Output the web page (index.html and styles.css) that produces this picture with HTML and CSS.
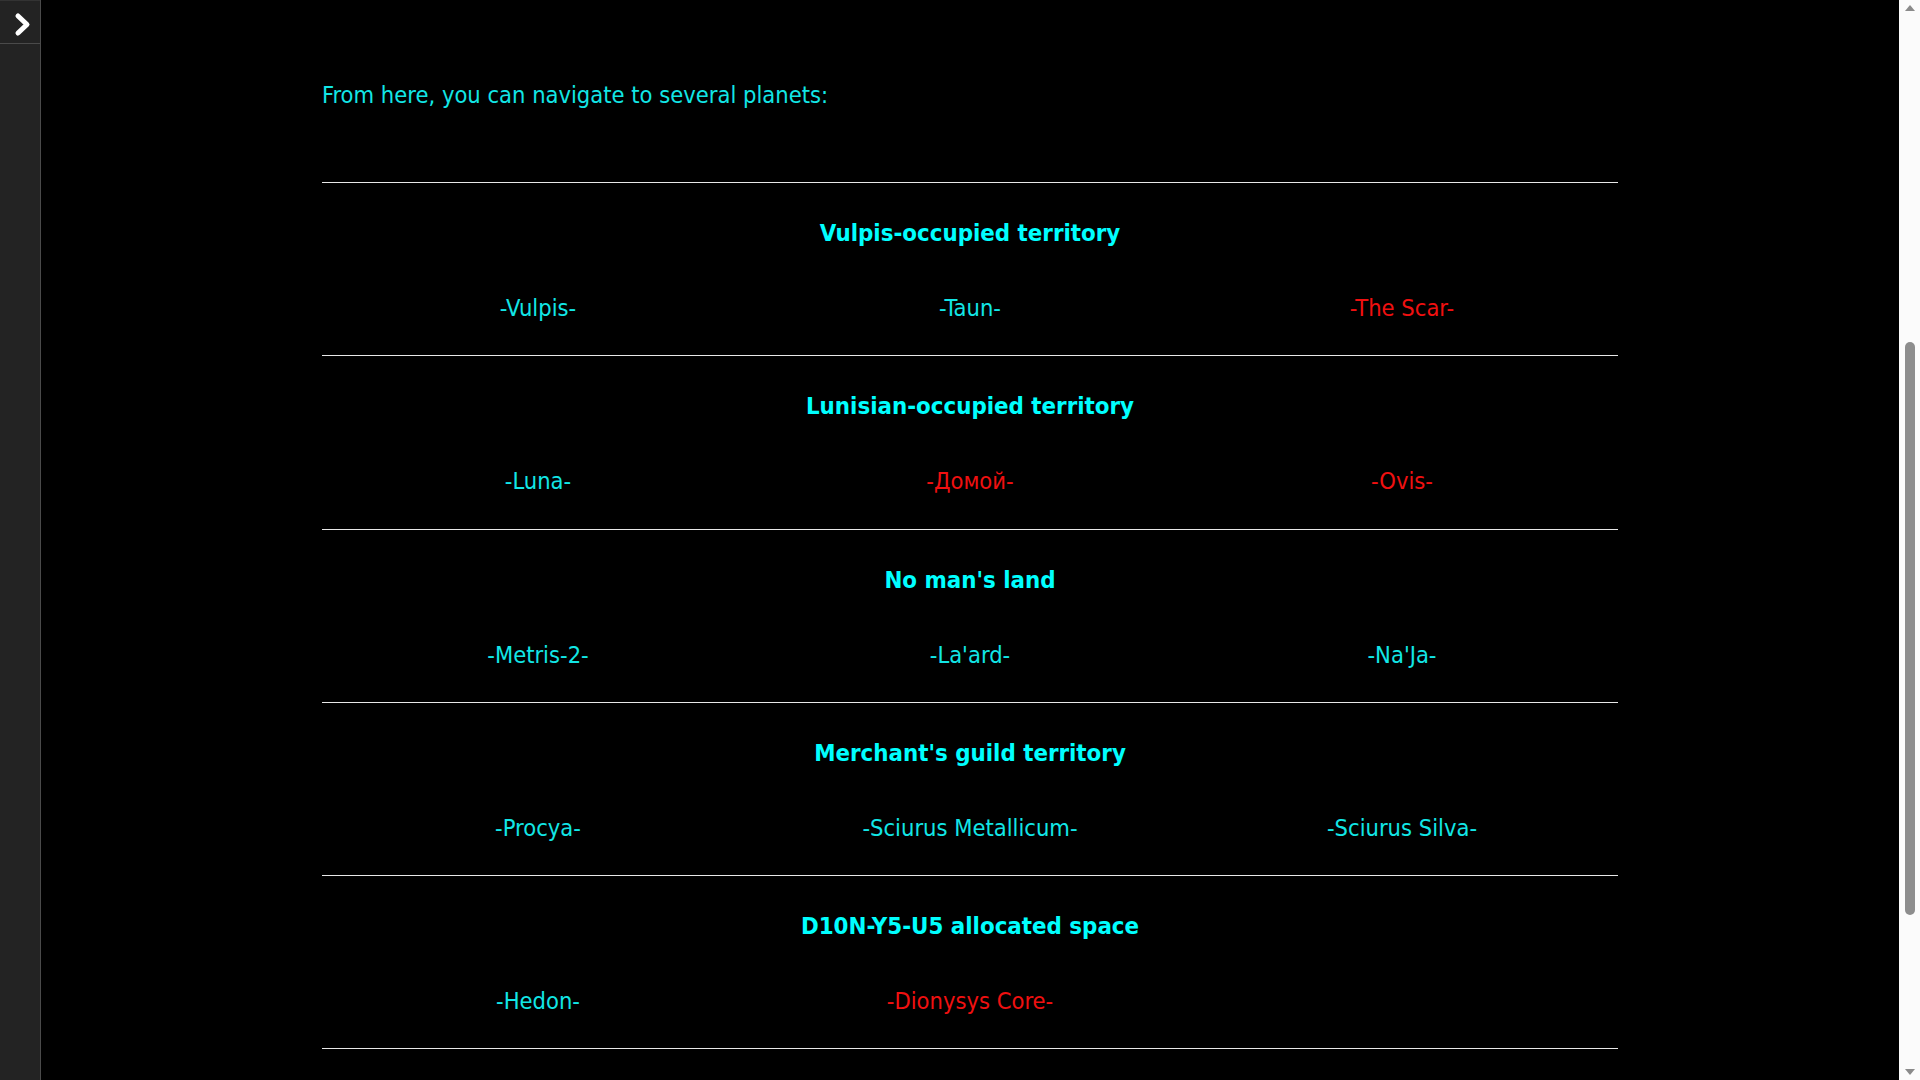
FILE: index.html
```html
<!DOCTYPE html>
<html>
<head>
    <meta name="viewport" content="width=device-width, initial-scale=1.0"/>
    <title>Planets</title>
    <link rel="stylesheet" href="styles.css">
</head>
<body>
    <div class="page">
        <div class="sidebar">
            <div class="side_btn">
                <svg width="40" height="42" viewBox="0 0 40 42">
                    <polyline points="18,15 27,23.5 18,32" fill="none" stroke="#fff" stroke-width="5" stroke-linecap="round" stroke-linejoin="round"/>
                </svg>
            </div>
        </div>

        <div class="main">
            <div class="content">
                <p class="intro">From here, you can navigate to several planets:</p>

                <div class="sector">
                    <h3>Vulpis-occupied territory</h3>
                    <div class="planets">
                        <a>-Vulpis-</a>
                        <a>-Taun-</a>
                        <a class="locked">-The Scar-</a>
                    </div>
                </div>

                <div class="sector">
                    <h3>Lunisian-occupied territory</h3>
                    <div class="planets">
                        <a>-Luna-</a>
                        <a class="locked">-Домой-</a>
                        <a class="locked">-Ovis-</a>
                    </div>
                </div>

                <div class="sector">
                    <h3>No man's land</h3>
                    <div class="planets">
                        <a>-Metris-2-</a>
                        <a>-La'ard-</a>
                        <a>-Na'Ja-</a>
                    </div>
                </div>

                <div class="sector">
                    <h3>Merchant's guild territory</h3>
                    <div class="planets">
                        <a>-Procya-</a>
                        <a>-Sciurus Metallicum-</a>
                        <a>-Sciurus Silva-</a>
                    </div>
                </div>

                <div class="sector last">
                    <h3>D10N-Y5-U5 allocated space</h3>
                    <div class="planets">
                        <a>-Hedon-</a>
                        <a class="locked">-Dionysys Core-</a>
                        <span></span>
                    </div>
                </div>
            </div>
        </div>

        <div class="scrollbar">
            <div class="arrow_up"></div>
            <div class="track">
                <div class="thumb"></div>
            </div>
            <div class="arrow_down"></div>
        </div>
    </div>
</body>
</html>
```

FILE: styles.css
```css
body {
    margin: 0;
    background-color: #000;
    font-family: "DejaVu Sans Condensed", "DejaVu Sans", sans-serif;
    overflow: hidden;
}

.page {
    display: flex;
    height: 1080px;
}

/* left panel */
.sidebar {
    width: 40px;
    background-color: #232323;
    border-right: 1px solid #4a4a4a;
}
.side_btn {
    height: 42px;
    border-bottom: 1px solid #4a4a4a;
    border-top: 1px solid #333;
}
.side_btn svg {
    display: block;
}

/* content */
.main {
    flex: 1;
    overflow: hidden;
}
.content {
    width: 1296px;
    margin: 0 auto;
    padding-top: 80px;
}
.intro {
    margin: 0 0 72px 0;
    color: #12e6e6;
    font-size: 23.5px;
    line-height: 30px;
}

.sector {
    border-top: 1px solid #e8e8e8;
    padding: 35px 0 32.3px 0;
}
.sector.last {
    border-bottom: 1px solid #e8e8e8;
}
.sector h3 {
    margin: 0 0 45px 0;
    text-align: center;
    color: #00ffff;
    font-size: 23.8px;
    line-height: 30px;
    font-weight: bold;
}
.planets {
    display: grid;
    grid-template-columns: 1fr 1fr 1fr;
}
.planets a {
    text-align: center;
    color: #12e6e6;
    font-size: 23.5px;
    line-height: 30px;
}
.planets a.locked {
    color: #f01010;
}

/* scrollbar */
.scrollbar {
    width: 21px;
    background-color: #fbfbfb;
    display: flex;
    flex-direction: column;
    align-items: center;
}
.arrow_up, .arrow_down {
    width: 0;
    height: 0;
    border-left: 5px solid transparent;
    border-right: 5px solid transparent;
    margin: 5px 0;
}
.arrow_up {
    border-bottom: 6px solid #8a8a8a;
}
.arrow_down {
    border-top: 6px solid #8a8a8a;
}
.track {
    flex: 1;
    width: 100%;
    display: flex;
    justify-content: center;
    padding-top: 326px;
}
.thumb {
    width: 10px;
    height: 573px;
    border-radius: 5px;
    background-color: #8d8d8d;
}
```
